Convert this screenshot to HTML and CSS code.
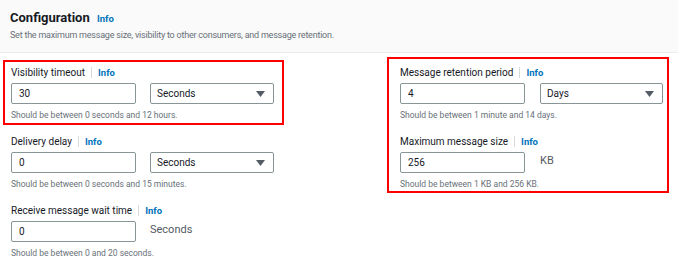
FILE: index.html
```html
<!DOCTYPE html>
<html lang="en">
<head>
<meta charset="utf-8">
<title>Configuration</title>
<link rel="stylesheet" href="styles.css">
</head>
<body>
<div class="panel">
  <header class="panel-header">
    <h2 class="title">Configuration <a class="info" href="#">Info</a></h2>
    <p class="desc">Set the maximum message size, visibility to other consumers, and message retention.</p>
  </header>
  <div class="panel-body">
    <div class="col col-left">
      <div class="group highlight">
        <div class="field">
          <div class="label"><span>Visibility timeout</span><span class="sep"></span><a class="info" href="#">Info</a></div>
          <div class="controls">
            <div class="input">30</div>
            <div class="select"><span>Seconds</span><svg class="caret" width="9" height="6" viewBox="0 0 9 6"><path d="M0 0H9L4.5 6Z" fill="#545b64"/></svg></div>
          </div>
          <div class="hint">Should be between 0 seconds and 12 hours.</div>
        </div>
      </div>
      <div class="group">
        <div class="field">
          <div class="label"><span>Delivery delay</span><span class="sep"></span><a class="info" href="#">Info</a></div>
          <div class="controls">
            <div class="input">0</div>
            <div class="select"><span>Seconds</span><svg class="caret" width="9" height="6" viewBox="0 0 9 6"><path d="M0 0H9L4.5 6Z" fill="#545b64"/></svg></div>
          </div>
          <div class="hint">Should be between 0 seconds and 15 minutes.</div>
        </div>
      </div>
      <div class="group">
        <div class="field">
          <div class="label"><span>Receive message wait time</span><span class="sep"></span><a class="info" href="#">Info</a></div>
          <div class="controls">
            <div class="input">0</div>
            <div class="unit">Seconds</div>
          </div>
          <div class="hint">Should be between 0 and 20 seconds.</div>
        </div>
      </div>
    </div>
    <div class="col col-right">
      <div class="group highlight right-box">
        <div class="field">
          <div class="label"><span>Message retention period</span><span class="sep"></span><a class="info" href="#">Info</a></div>
          <div class="controls">
            <div class="input">4</div>
            <div class="select"><span>Days</span><svg class="caret" width="9" height="6" viewBox="0 0 9 6"><path d="M0 0H9L4.5 6Z" fill="#545b64"/></svg></div>
          </div>
          <div class="hint">Should be between 1 minute and 14 days.</div>
        </div>
        <div class="field">
          <div class="label"><span>Maximum message size</span><span class="sep"></span><a class="info" href="#">Info</a></div>
          <div class="controls">
            <div class="input">256</div>
            <div class="unit">KB</div>
          </div>
          <div class="hint">Should be between 1 KB and 256 KB.</div>
        </div>
      </div>
    </div>
  </div>
</div>
</body>
</html>
```

FILE: styles.css
```css
* { box-sizing: border-box; }
html, body { margin: 0; padding: 0; background: #ffffff; }
body {
  font-family: Roboto, "Liberation Sans", Arial, sans-serif;
  color: #16191f;
  width: 678px;
  height: 267px;
  overflow: hidden;
}
a { text-decoration: none; }
.panel-header {
  background: #fafafa;
  border-bottom: 1px solid #eaeded;
  height: 53px;
  padding: 10px 10px 0 10px;
}
.title {
  margin: 0;
  font-size: 13px;
  line-height: 16px;
  font-weight: 700;
  color: #16191f;
}
.title .info { margin-left: 4px; }
.info {
  color: #0073bb;
  font-weight: 700;
  font-size: 9.5px;
}
.desc {
  margin: 2px 0 0 0;
  font-size: 9px;
  line-height: 12px;
  color: #687078;
  letter-spacing: -0.22px;
}
.panel-body {
  display: grid;
  grid-template-columns: 281px 282px;
  column-gap: 103px;
  padding: 0 0 0 3px;
}
.col { display: flex; flex-direction: column; }
.col-left { padding-top: 7px; gap: 4px; }
.col-right { padding-top: 4px; }
.group {
  border: 2px solid transparent;
  padding: 3px 6px 2px 6px;
}
.group.highlight { border-color: #ff0000; }
.right-box { padding: 6px 4px 1px 11px; display: flex; flex-direction: column; gap: 13px; }
.right-box .controls { gap: 15px; }
.right-box .select { width: 123px; }
.label {
  display: flex;
  align-items: center;
  height: 14px;
  font-size: 10px;
  color: #16191f;
}
.sep {
  width: 1px;
  height: 11px;
  background: #d5dbdb;
  margin: 0 6px 0 6px;
}
.controls {
  display: flex;
  align-items: center;
  gap: 14px;
  margin-top: 4px;
}
.input, .select {
  flex-shrink: 0;
  height: 21px;
  border: 1px solid #879596;
  border-radius: 2px;
  display: flex;
  align-items: center;
  font-size: 10px;
  color: #16191f;
}
.input { width: 125px; padding-left: 7px; }
.select { width: 124px; padding: 0 8px 0 6px; justify-content: space-between; }
.caret { display: block; }
.unit {
  font-size: 11px;
  color: #545b64;
  height: 21px;
  display: flex;
  align-items: flex-start;
  padding-top: 2px;
}
.hint {
  margin-top: 5px;
  font-size: 8.5px;
  line-height: 12px;
  color: #687078;
}
```
